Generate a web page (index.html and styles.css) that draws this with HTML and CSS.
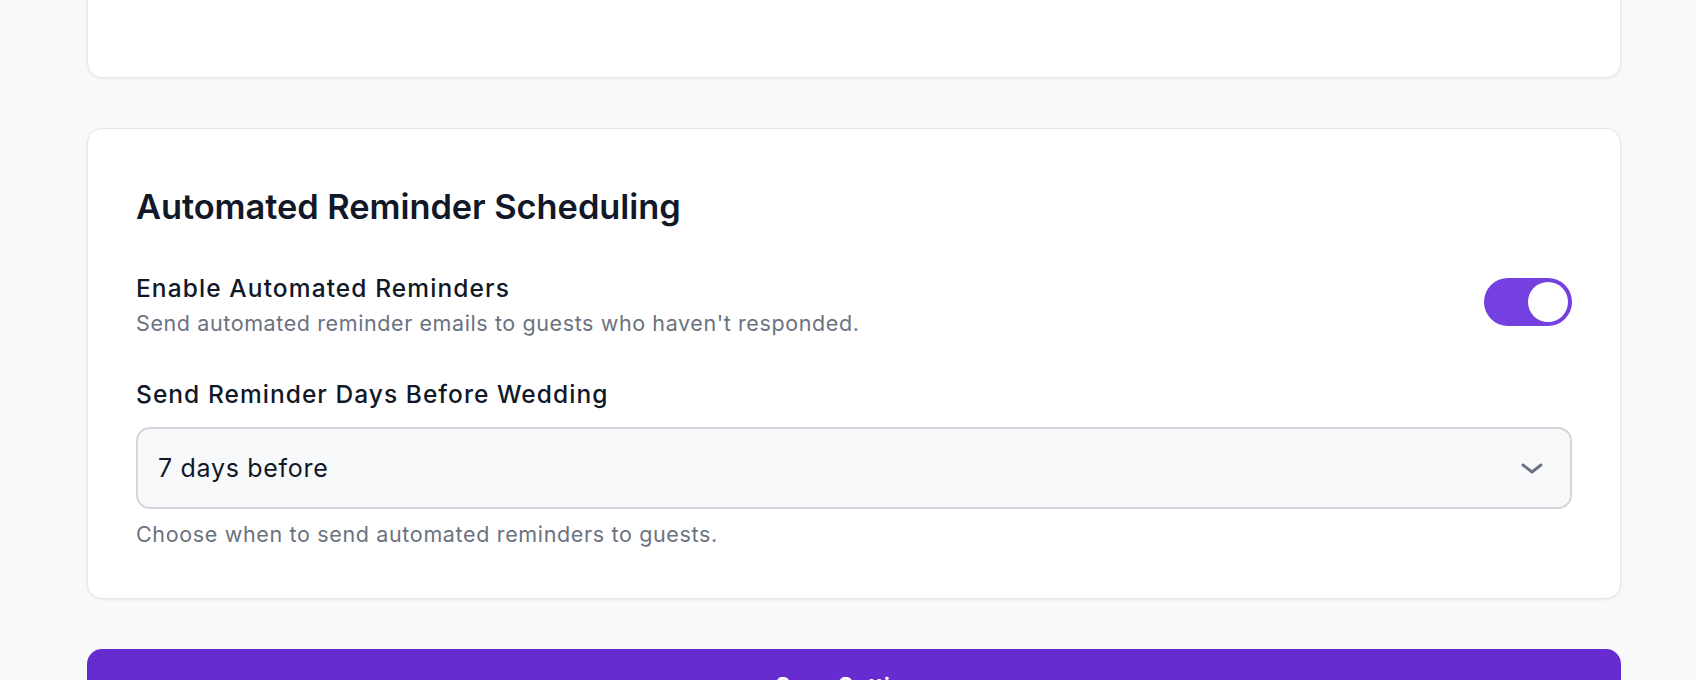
FILE: index.html
```html
<!DOCTYPE html>
<html lang="en">
<head>
<meta charset="utf-8">
<title>Settings</title>
<link rel="stylesheet" href="styles.css">
</head>
<body>
<main class="page">
  <section class="card card-top"></section>

  <section class="card">
    <h2 class="card-title">Automated Reminder Scheduling</h2>

    <div class="setting-row">
      <div class="setting-text">
        <div class="setting-label">Enable Automated Reminders</div>
        <div class="setting-desc">Send automated reminder emails to guests who haven't responded.</div>
      </div>
      <button class="toggle toggle-on" type="button" aria-pressed="true"><span class="toggle-knob"></span></button>
    </div>

    <div class="field">
      <label class="field-label">Send Reminder Days Before Wedding</label>
      <div class="select">
        <span class="select-value">7 days before</span>
        <svg class="select-chevron" width="22" height="11" viewBox="0 0 22 11" aria-hidden="true">
          <polyline points="2,2 11,9 20,2" fill="none" stroke="#6b7280" stroke-width="2.9" stroke-linecap="round" stroke-linejoin="round"/>
        </svg>
      </div>
      <div class="field-help">Choose when to send automated reminders to guests.</div>
    </div>
  </section>

  <button class="save-btn" type="button">Save Settings</button>
</main>
</body>
</html>
```

FILE: styles.css
```css
* { box-sizing: border-box; }

html, body {
  margin: 0;
  padding: 0;
  background: #f8f9fb;
  font-family: Inter, "Noto Sans", "Liberation Sans", sans-serif;
  color: #111827;
}

body { overflow: hidden; height: 680px; }

.page {
  width: 1534px;
  margin-left: 87px;
  margin-top: -122px;
  display: flex;
  flex-direction: column;
  gap: 50px;
}

.card {
  background: #ffffff;
  border: 1px solid #e5e7eb;
  border-radius: 15px;
  box-shadow: 0 1px 3px rgba(17, 24, 39, 0.06);
  padding: 56px 48px 50px 48px;
}

.card-top {
  height: 200px;
  padding: 0;
}

.card-title {
  margin: 0;
  font-size: 34.4px;
  line-height: 44px;
  font-weight: 600;
  letter-spacing: -0.05px;
  color: #111827;
}

.setting-row {
  margin-top: 44px;
  display: flex;
  justify-content: space-between;
  align-items: flex-start;
}

.setting-label {
  font-size: 24.5px;
  line-height: 30px;
  font-weight: 500;
  letter-spacing: 1.1px;
  color: #111827;
}

.setting-desc {
  margin-top: 6px;
  font-size: 21.5px;
  line-height: 28px;
  letter-spacing: 0.6px;
  color: #6b7280;
}

.toggle {
  margin-top: 5px;
  width: 88px;
  height: 48px;
  border: none;
  border-radius: 24px;
  background: #7440e0;
  padding: 4px;
  display: flex;
  justify-content: flex-end;
  cursor: pointer;
}

.toggle-knob {
  width: 40px;
  height: 40px;
  border-radius: 50%;
  background: #ffffff;
}

.field { margin-top: 42px; }

.field-label {
  display: block;
  font-size: 24.5px;
  line-height: 30px;
  font-weight: 500;
  letter-spacing: 1.05px;
  color: #111827;
}

.select {
  margin-top: 18px;
  height: 82px;
  border: 2px solid #d4d6dc;
  border-radius: 14px;
  background: #f8f9fb;
  display: flex;
  align-items: center;
  justify-content: space-between;
  padding: 0 27px 0 20px;
}

.select-value {
  font-size: 25px;
  letter-spacing: 0.7px;
  color: #111827;
}

.select-chevron { display: block; }

.field-help {
  margin-top: 11px;
  font-size: 21.5px;
  line-height: 28px;
  letter-spacing: 0.65px;
  color: #6b7280;
}

.save-btn {
  width: 100%;
  border: none;
  border-radius: 15px;
  background: #672ccf;
  color: #ffffff;
  font-family: inherit;
  font-size: 24px;
  font-weight: 600;
  line-height: 32px;
  padding: 22px 0;
}
```
